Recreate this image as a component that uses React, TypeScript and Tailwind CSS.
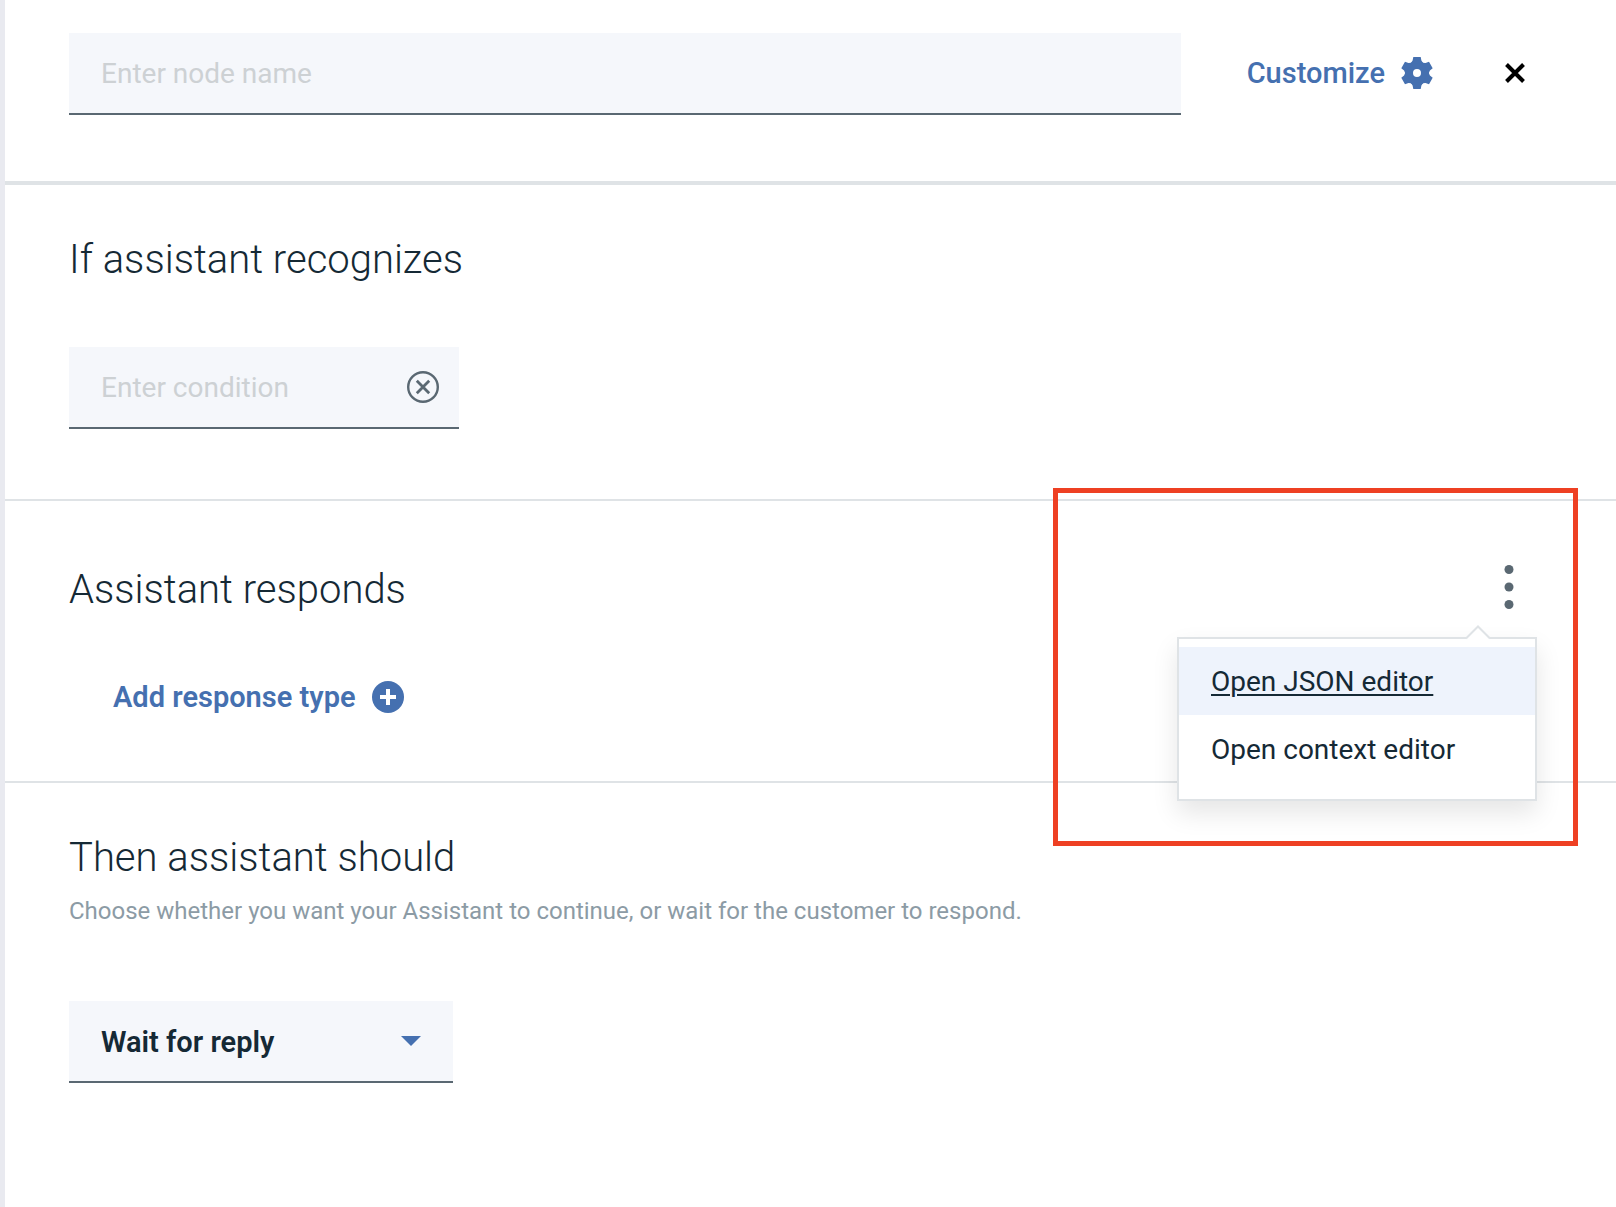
import React from "react";

const fieldBox = "h-[82px] w-full border-b-2 border-[#5a6872] bg-[#f5f7fb] pl-8 outline-none";

function Gear() {
  return (
    <svg width="32" height="32" viewBox="-16 -16 32 32" fill="#4570b0" className="shrink-0" aria-hidden="true">
      <circle r="8" fill="none" stroke="#4570b0" strokeWidth="8" />
      {[0, 60, 120, 180, 240, 300].map((angle) => (
        <path key={angle} d="M-3.7-16H3.7L4.4-12.4 6.4-9.6H-6.4L-4.4-12.4Z" transform={`rotate(${angle})`} />
      ))}
    </svg>
  );
}

function Cross() {
  return (
    <svg width="20" height="20" viewBox="0 0 20 20" stroke="#000" strokeWidth="4" aria-hidden="true">
      <path d="M1.5 1.5 18.5 18.5M18.5 1.5 1.5 18.5" />
    </svg>
  );
}

function Heading({ children }: { children: React.ReactNode }) {
  return <h2 className="text-[40px] leading-[50px] font-light">{children}</h2>;
}

function ActionMenu() {
  return (
    <div className="absolute top-[136px] right-[79px] w-[360px] border-2 border-[#dfe3e6] bg-white pt-2 pb-4 shadow-[0_12px_24px_rgba(0,0,0,0.1)]">
      <svg width="24" height="15" viewBox="0 0 24 15" className="absolute -top-[14px] right-[45px]" aria-hidden="true">
        <path d="M0 15V13.5L12 1.5 24 13.5V15Z" fill="#fff" />
        <path d="M0 13.5 12 1.5 24 13.5" fill="none" stroke="#dfe3e6" strokeWidth="2" />
      </svg>
      <button type="button" className="block h-[68px] w-full bg-[#eef3fc] pt-0.5 pl-8 text-left underline decoration-2 underline-offset-3">
        Open JSON editor
      </button>
      <button type="button" className="block h-[68px] w-full pt-0.5 pl-8 text-left">
        Open context editor
      </button>
    </div>
  );
}

export default function App() {
  return (
    <main className="min-h-screen border-l-[5px] border-[#e9eaf0] bg-white font-[Roboto,sans-serif] text-[28px] leading-8 text-[#152935]">
      <header className="flex items-start border-b-4 border-[#dfe3e6] pt-[33px] pr-[91px] pb-[66px] pl-16">
        <input aria-label="Node name" placeholder="Enter node name" className={fieldBox + " min-w-0 flex-1 placeholder:text-[#cdd1d4]"} />
        <div className="flex h-20 shrink-0 items-center">
          <button type="button" className="ml-[66px] flex items-center gap-4 text-[29px] font-medium text-[#4570b0]">
            Customize
            <Gear />
          </button>
          <button type="button" aria-label="Close" className="ml-[72px]">
            <Cross />
          </button>
        </div>
      </header>

      <section className="border-b-2 border-[#dfe3e6] px-16 pt-[50px] pb-[70px]">
        <Heading>If assistant recognizes</Heading>
        <div className="relative mt-[62px] w-[390px]">
          <input aria-label="Condition" placeholder="Enter condition" className={fieldBox + " pr-16 placeholder:text-[#cdd1d4]"} />
          <button type="button" aria-label="Clear condition" className="absolute top-6 right-5">
            <svg width="32" height="32" viewBox="0 0 32 32" fill="none" stroke="#5a6872" aria-hidden="true">
              <circle cx="16" cy="16" r="14.8" strokeWidth="2.4" />
              <path d="M9.8 9.8 22.2 22.2M22.2 9.8 9.8 22.2" strokeWidth="2.8" />
            </svg>
          </button>
        </div>
      </section>

      <section className="relative border-b-2 border-[#dfe3e6] px-16 pt-16 pb-[68px]">
        <div className="flex items-start justify-between">
          <Heading>Assistant responds</Heading>
          <button type="button" aria-label="Response options" className="mr-[38px]">
            <svg width="10" height="46" viewBox="0 0 10 46" fill="#5a6872" aria-hidden="true">
              <circle cx="5" cy="4.5" r="4.5" />
              <circle cx="5" cy="22" r="4.5" />
              <circle cx="5" cy="39.5" r="4.5" />
            </svg>
          </button>
        </div>
        <button type="button" className="mt-[66px] ml-11 flex items-center gap-4 text-[29px] font-semibold text-[#4570b0]">
          Add response type
          <svg width="32" height="32" viewBox="0 0 32 32" aria-hidden="true">
            <circle cx="16" cy="16" r="16" fill="#4570b0" />
            <path d="M16 8v16M8 16h16" stroke="#fff" strokeWidth="4" />
          </svg>
        </button>
        <ActionMenu />
        <div className="pointer-events-none absolute -top-[13px] right-[38px] h-[358px] w-[525px] border-5 border-[#ee4023]" />
      </section>

      <section className="px-16 pt-[50px] pb-16">
        <Heading>Then assistant should</Heading>
        <p className="mt-3 text-2xl leading-8 text-[#8c9ba5]">
          Choose whether you want your Assistant to continue, or wait for the customer to respond.
        </p>
        <div className="relative mt-[74px] w-[384px]">
          <select aria-label="Next step" className={fieldBox + " appearance-none rounded-none pt-0.5 text-[29px] font-semibold"}>
            <option>Wait for reply</option>
          </select>
          <svg width="20" height="10" viewBox="0 0 20 10" fill="#4570b0" className="pointer-events-none absolute top-[35px] right-8" aria-hidden="true">
            <path d="M0 0h20L10 10Z" />
          </svg>
        </div>
      </section>
    </main>
  );
}
